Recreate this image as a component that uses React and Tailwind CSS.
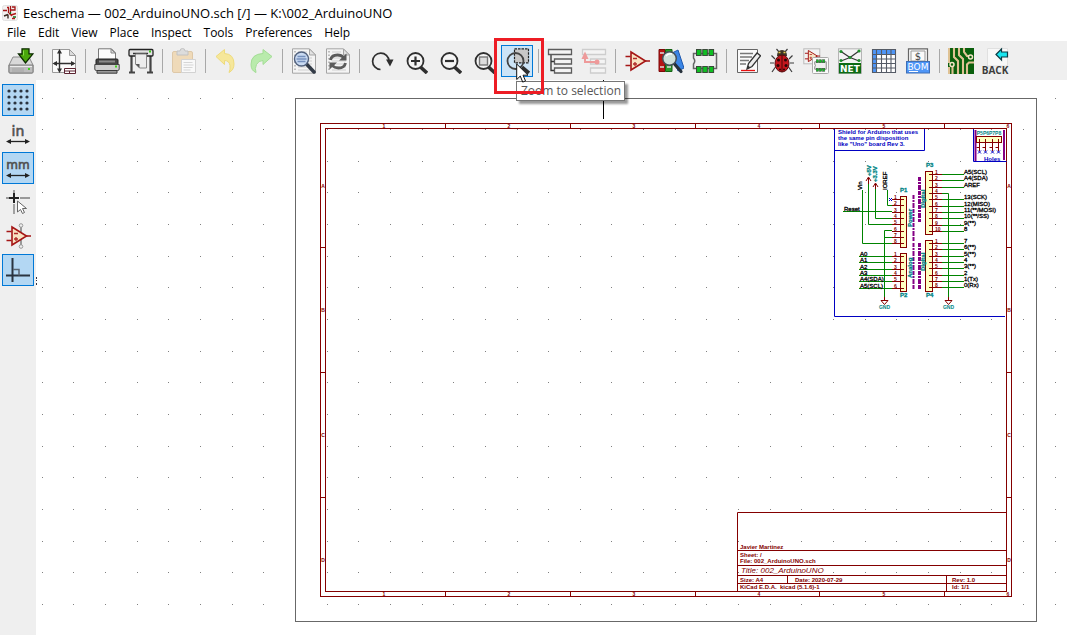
import React from "react";

const DARK = "#2f2f2f";

function Svg({ children, size = 26 }) {
  return (
    <svg width={size} height={size} viewBox="0 0 26 26" fill="none" aria-hidden="true" className="block shrink-0">
      {children}
    </svg>
  );
}

const SaveIcon = () => (
  <Svg>
    <path d="M5 9h16l4 8v7q0 1-1 1H2q-1 0-1-1v-7z" fill="#d9d9d9" stroke="#8a8a8a" />
    <path d="M1 17h24v7q0 1-1 1H2q-1 0-1-1z" fill="#bdbdbd" stroke="#7d7d7d" />
    <path d="M2 18.5h22" stroke="#ececec" />
    <path d="M4 21h12M4 23h12" stroke="#a5a5a5" />
    <rect x="20" y="20" width="2" height="2" fill="#3fd01c" />
    <path d="M14 .8h7v5h4L17.500 15 10.500 6H14z" fill="#4aa70b" stroke="#0d2b02" strokeWidth="1.300" />
    <path d="M15.500 2.500v5" stroke="#8be04a" />
  </Svg>
);

const PageIcon = () => (
  <Svg>
    <path d="M1.500 1.500h17l6 6v17h-23z" fill="#fafafa" stroke="#9a9a9a" />
    <path d="M18.500 1.500v6h6z" fill="#dcdcdc" stroke="#9a9a9a" />
    <path d="M8.500 3v20M3 15.500h20" stroke={DARK} strokeWidth="1.400" />
    <path d="M8.500 1l2.500 4.500H6zM8.500 25l2.500-4.500H6zM1.500 15.500L6 13v5zM24.500 15.500L20 13v5z" fill={DARK} />
    <path d="M13.500 20.500h11v5h-11zM13.500 23h11M18.500 23v2.500" fill="#fff" stroke="#5a2230" />
  </Svg>
);

const PrintIcon = () => (
  <Svg>
    <path d="M4.500.8h13l4 4V13h-17z" fill="#fcfcfc" stroke="#777" />
    <path d="M17 1v4h4z" fill="#ddd" stroke="#888" />
    <rect x="2" y="11" width="22" height="6" rx="1" fill="#454545" stroke="#222" />
    <path d="M5 13.500h16" stroke="#8a8a8a" strokeWidth="2" />
    <path d="M.8 16.500h24.400V21q0 1.500-1.500 1.500H2.300Q.8 22.500.8 21z" fill="#cfcfcf" stroke="#444" />
    <path d="M3 22.500h20v2.700H3z" fill="#9a9a9a" stroke="#3b3b3b" />
    <rect x="21" y="17.500" width="2" height="2" fill="#41d21c" />
  </Svg>
);

const PlotIcon = () => (
  <Svg>
    <path d="M3.500 7v17M22.500 7v17M1 24.500h6M19 24.500h6" stroke="#444" strokeWidth="2.200" />
    <path d="M2 1.500h22q1 0 1 1.500v4q0 1-1 1H2q-1 0-1-1V3q0-1.500 1-1.500z" fill="#e2e2e2" stroke="#222" strokeWidth="1.300" />
    <path d="M5 5.500h15" stroke="#333" strokeWidth="1.500" />
    <path d="M7.500 6h11v14h-7l-4-4z" fill="#ededed" stroke="#888" />
    <path d="M7.500 16h4v4z" fill="#555" />
    <rect x="21" y="2.500" width="2" height="2" fill="#38cb16" />
  </Svg>
);

const PasteIcon = () => (
  <Svg>
    <g opacity=".65">
      <rect x="1.500" y="3.500" width="20" height="21" rx="1.500" fill="#efcf9d" stroke="#d5b483" />
      <path d="M6 3h3q0-2.500 2.500-2.500T14 3h3v4H6z" fill="#d2d2d2" stroke="#aaa" />
      <path d="M10.500 11.500h14v13h-14z" fill="#fff" stroke="#c3c3c3" />
      <path d="M12.500 14.500h9M12.500 17h10M12.500 19.500h9M12.500 22h7" stroke="#c9c9c9" />
    </g>
  </Svg>
);

const UndoIcon = () => (
  <Svg>
    <path d="M2 8.500L10.500 1.500v4Q20 6 20 16q0 6-5 8.500 1.500-3 1-7-.8-5-5.500-5v4z" fill="#f6e79a" stroke="#eedb7c" />
  </Svg>
);
const RedoIcon = () => (
  <Svg>
    <path d="M24 8.500L15 1.500v4Q3 6 3 16.500q0 6 5 8-1.500-4 .5-8 2-4 6.500-4v4z" fill="#b9ebac" stroke="#a3dd95" />
  </Svg>
);

const PageLines = () => (
  <>
    <path d="M1.500.8h17l6 6v18.400h-23z" fill="#f4f4f4" stroke="#a5a5a5" />
    <path d="M18.500 1v6h6z" fill="#e2e2e2" stroke="#a5a5a5" />
    <path d="M4 3v21" stroke="#aaa" strokeWidth="1.500" strokeDasharray="1.500 2" />
    <path d="M7 4h9M7 7h9M7 10h14M7 13h14M7 16h14M7 19h14M7 22h14" stroke="#cfcfcf" />
  </>
);
const FindIcon = () => (
  <Svg>
    <PageLines />
    <path d="M15.500 16l7.500 8" stroke="#333b47" strokeWidth="3.500" strokeLinecap="round" />
    <circle cx="10.500" cy="11" r="7" fill="#c9daf2" stroke="#51617d" strokeWidth="1.400" />
    <path d="M6.500 8.500h8M5.500 11h10M6.500 13.500h8" stroke="#7590bd" strokeWidth="1.300" />
  </Svg>
);
const ReplaceIcon = () => (
  <Svg>
    <PageLines />
    <path d="M5.500 12q1-5 7-5 4 0 6 2.500M20.500 15q-1 5-7 5-4 0-6-2.500" stroke="#5b5b5b" strokeWidth="2.800" />
    <path d="M21.500 5.500V12.500H14zM4.500 21.500V14.500H12z" fill="#5b5b5b" />
  </Svg>
);
const RedrawIcon = () => (
  <Svg>
    <path d="M12.500 21.500A8.200 8.200 0 1 1 21 13" stroke={DARK} strokeWidth="1.700" />
    <path d="M18 11.500h7.500L22 18.500z" fill={DARK} />
  </Svg>
);

const Lens = ({ children }) => (
  <Svg>
    <path d="M18.500 19l6.500 6" stroke={DARK} strokeWidth="3.600" />
    <circle cx="13.500" cy="13" r="8" fill="#f5f5f5" stroke={DARK} strokeWidth="1.800" />
    {children}
  </Svg>
);
const ZoomInIcon = () => (
  <Lens><path d="M9 13h9M13.500 8.500v9" stroke={DARK} strokeWidth="2.200" /></Lens>
);
const ZoomOutIcon = () => (
  <Lens><path d="M9 13h9" stroke={DARK} strokeWidth="2.200" /></Lens>
);
const ZoomFitIcon = () => (
  <Lens><rect x="9.500" y="9" width="8" height="8" fill="#ddd" stroke="#777" strokeWidth="1.400" /></Lens>
);
const ZoomSelIcon = () => (
  <Svg>
    <rect x="10.500" y=".8" width="14" height="14" fill="#c8c8c8" stroke="#222" strokeWidth="1.200" strokeDasharray="2.500 1" />
    <path d="M18 19l7 6" stroke={DARK} strokeWidth="3.600" />
    <circle cx="11.500" cy="13" r="8" stroke="#444" strokeWidth="1.800" />
  </Svg>
);

const HierIcon = () => (
  <Svg>
    <path d="M4 6v16.500h3M4 13.500h3" stroke="#333" strokeWidth="1.300" />
    <path d="M1.500 1.500h23v5h-23zM7.500 11h17v5h-17zM7.500 20h17v5h-17z" fill="#f4f4f4" stroke="#5c5c5c" strokeWidth="1.300" />
  </Svg>
);
const LeaveIcon = () => (
  <Svg>
    <path d="M1.500 1.500h23v5h-23zM9.500 11h15v5h-15zM9.500 20h15v5h-15z" fill="#f4f4f4" stroke="#cdcdcd" strokeWidth="1.300" />
    <path d="M4 9v5h12" stroke="#ee9a9a" strokeWidth="2" />
    <path d="M4 3.500L7.500 11H.5z" fill="#ee9a9a" />
    <circle cx="16" cy="14" r="2.500" fill="#ee9a9a" />
  </Svg>
);

const OpAmp = () => (
  <>
    <path d="M1.500 8.500h5M1.500 17.500h5M20 13h6" stroke="#a51616" strokeWidth="1.600" />
    <path d="M7 4v18L21.500 13z" fill="#f8e3c3" stroke="#a51616" strokeWidth="1.600" />
    <path d="M9 10.500h4M9 16h4M11 14v4" stroke="#b02a2a" strokeWidth="1.300" />
  </>
);
const SymbolIcon = () => <Svg><OpAmp /></Svg>;

const LibraryIcon = () => (
  <Svg>
    <path d="M14 5l6-3 6 18-6 3z" fill="#3b86e6" stroke="#1f59ad" />
    <path d="M1 1.500h6v22H1z" fill="#b51414" stroke="#7d0909" />
    <path d="M7.500 1.500h6.500v22H7.500z" fill="#2b9a2b" stroke="#146314" />
    <path d="M2 5h4M2 19h4M9 19h4" stroke="#ddd" strokeWidth="1.500" />
    <path d="M16.500 16l6.500 7.500" stroke="#26303a" strokeWidth="3.200" strokeLinecap="round" />
    <circle cx="11.500" cy="10.500" r="6.800" fill="#cfe0da" stroke="#45505a" strokeWidth="1.500" />
    <path d="M8 8q2-3 6-2" stroke="#fff" strokeWidth="1.500" />
  </Svg>
);

const Chip = () => (
  <>
    <path d="M1.500 5.500h23v15h-23v-4.500q2.500-3 0-6z" fill="#f0f0f0" stroke="#666" strokeWidth="1.500" />
    <g fill="#0fbf22" stroke="#3a4a3a" strokeWidth="1">
      {[4.5, 10.75, 17].map((x) => (
        <React.Fragment key={x}>
          <rect x={x} y="1.500" width="4.600" height="6" />
          <rect x={x} y="18.500" width="4.600" height="6" />
        </React.Fragment>
      ))}
    </g>
  </>
);
const FootprintIcon = () => <Svg><Chip /></Svg>;

const AnnotateIcon = () => (
  <Svg>
    <path d="M2.500 1.500h20v23h-20z" fill="#fafafa" stroke="#666" />
    <path d="M5 5.500h13M5 9h12M5 12.500h9M5 16h6" stroke="#777" strokeWidth="1.300" />
    <path d="M6 22.500h14" stroke="#e80f0f" strokeWidth="1.300" />
    <path d="M12 21l1.500-5.500L22 5l3.500 2.800L17 18.500z" fill="#eee" stroke="#333" strokeWidth="1.300" />
    <path d="M12 21l1-3.500 2.500 2z" fill="#333" />
  </Svg>
);

const BugIcon = () => (
  <Svg>
    <path d="M6 11L2.500 7.500M5 15H1M6.500 19L3 24M20 11l3.500-3.500M21 15h4M19.500 19l3.500 5M10 4L7.500 1M16 4l2.500-3" stroke="#3c3c3c" strokeWidth="1.200" />
    <path d="M8 8q0-6 5-6t5 6z" fill="#3b3426" />
    <ellipse cx="13" cy="15.500" rx="7" ry="8.500" fill="#c5161d" stroke="#5a0b0d" />
    <path d="M13 7v17" stroke="#4a0808" />
    <g fill="#2a0707">
      <circle cx="9.500" cy="12" r="1.500" /><circle cx="16.500" cy="12" r="1.500" />
      <circle cx="9" cy="17.500" r="1.500" /><circle cx="17" cy="17.500" r="1.500" />
      <circle cx="11" cy="21.500" r="1" /><circle cx="15" cy="21.500" r="1" />
    </g>
    <path d="M9.500 4.500h2M14.500 4.500h2" stroke="#e5c94a" strokeWidth="1.400" />
  </Svg>
);

const AssignIcon = () => (
  <Svg>
    <rect x=".8" y=".8" width="16" height="15" fill="#f3f3f3" stroke="#bbb" />
    <g transform="translate(1 0) scale(.62)"><OpAmp /></g>
    <rect x="9.500" y="9.500" width="16" height="16" rx="1" fill="#fafafa" stroke="#aaa" />
    <g transform="translate(11 11) scale(.5)"><Chip /></g>
  </Svg>
);

const NetIcon = () => (
  <Svg>
    <rect x="1.500" y=".8" width="23" height="24.500" fill="#f3f3f3" stroke="#b5b5b5" />
    <path d="M4 3.500L13 9.500 22 3M13 9.500L4 13M13 9.500L22 13" stroke="#333" strokeWidth="1.200" />
    <g fill="#1c8f2a">
      <circle cx="4" cy="3.500" r="1.600" /><circle cx="22" cy="3" r="1.600" />
      <circle cx="4" cy="12.500" r="1.600" /><circle cx="22" cy="12.500" r="1.600" /><circle cx="13" cy="9.500" r="1.600" />
    </g>
    <rect x="2" y="15" width="22" height="10.500" fill="#0c6b14" />
    <text x="13" y="23.500" textAnchor="middle" className="fill-white font-['DejaVu_Sans'] text-[9px] font-bold">NET</text>
  </Svg>
);

const TableIcon = () => (
  <Svg>
    <path d="M1.500 1.500h23v23h-23z" fill="#fff" />
    <path d="M1.500 1.500h23v5h-23zM1.500 1.500h4v23h-4z" fill="#4f96f7" />
    <path d="M1.500 1.500h23v23h-23zM5.500 1.500v23M10.500 1.500v23M15.500 1.500v23M20 1.500v23M1.500 6.500h23M1.500 11h23M1.500 15.500h23M1.500 20h23" stroke="#555b66" strokeWidth="1.100" />
  </Svg>
);

const BomIcon = () => (
  <Svg>
    <path d="M3.500.8h19v14h-19z" fill="#fafafa" stroke="#666" strokeWidth="1.200" />
    <path d="M6 3h14v10H6z" stroke="#999" />
    <text x="13" y="12" textAnchor="middle" className="fill-[#444] font-['DejaVu_Sans'] text-[10px]">$</text>
    <rect x="1.500" y="13.500" width="23" height="11.500" fill="#4f96f7" stroke="#3e6fb6" />
    <text x="13" y="22" textAnchor="middle" className="fill-white font-['DejaVu_Sans'] text-[9px]">BOM</text>
    <path d="M4 23.500h9" stroke="#fff" />
  </Svg>
);

const BoardIcon = () => (
  <Svg>
    <path d="M0 0h26v26H0z" fill="#0a5f0d" />
    <path d="M1 0v15M1 19v7M6 0v9l4 4v13M11 0v7l4 4v15M26 14.500h-5l-2 2V26M16 0v4l3 4h2M4.500 18v8" stroke="#dfc294" strokeWidth="2.100" />
    <circle cx="4" cy="16.500" r="2" fill="#0a5f0d" stroke="#f3e4c6" strokeWidth="1.500" />
    <circle cx="22.500" cy="9" r="2" fill="#0a5f0d" stroke="#f3e4c6" strokeWidth="1.500" />
  </Svg>
);

const BackIcon = () => (
  <svg width="30" height="32" viewBox="-2 -3 30 32" aria-hidden="true" className="block shrink-0">
    <path d="M5.500.5h20V18h-20z" fill="#f8f8f8" stroke="#e0e0e0" />
    <path d="M14 6.500L19.500 1v3h6v5h-6v3z" fill="#19e5ef" stroke="#0b3b44" strokeWidth="1.200" />
    <text x="13" y="26" textAnchor="middle" className="fill-[#3d3d3d] font-['Open_Sans'] text-[10px] font-bold">BACK</text>
  </svg>
);

const GridIcon = () => (
  <Svg>
    <g fill="#2a3440">
      {[4, 10, 16, 22].map((y) => [4, 10, 16, 22].map((x) => <circle key={`${x}-${y}`} cx={x} cy={y} r="1.600" />))}
    </g>
  </Svg>
);
const UnitArrow = () => (
  <>
    <path d="M3 20.500h20" stroke="#222" strokeWidth="1.300" />
    <path d="M1 20.500l5-2.500v5zM25 20.500l-5-2.500v5z" fill="#222" />
  </>
);
const InIcon = () => (
  <Svg>
    <text x="13" y="15" textAnchor="middle" stroke="#505050" strokeWidth=".6" className="fill-[#505050] font-['DejaVu_Sans'] text-[14px]">in</text>
    <UnitArrow />
  </Svg>
);
const MmIcon = () => (
  <Svg>
    <text x="13" y="14" textAnchor="middle" stroke="#505050" strokeWidth=".6" className="fill-[#505050] font-['DejaVu_Sans'] text-[12px]">mm</text>
    <UnitArrow />
  </Svg>
);
const CursorIcon = () => (
  <Svg>
    <path d="M1 9h3M15 9h10M9 1v3M9 15v10" stroke="#999" strokeWidth="1.800" />
    <path d="M4 9h10M9 4v10" stroke="#222" strokeWidth="2" />
    <path d="M12.500 12v11l3-2.500 2 4 2-1-2-4h4z" fill="#fff" stroke="#666" />
  </Svg>
);
const HiddenPinIcon = () => (
  <Svg>
    <path d="M16 3v20" stroke="#999" strokeWidth="2" />
    <circle cx="16" cy="2.500" r="1.800" fill="#eee" stroke="#999" />
    <circle cx="16" cy="23.500" r="1.800" fill="#eee" stroke="#999" />
    <OpAmp />
  </Svg>
);
const OrthoIcon = () => (
  <Svg>
    <path d="M7.500 1v24M1 18.500h24" stroke="#2a3440" strokeWidth="2" />
    <path d="M8 12.500h6v6" stroke="#5a6674" strokeWidth="1.500" />
  </Svg>
);

const toolGroups = [
  [["Save", SaveIcon]],
  [["Page settings", PageIcon]],
  [["Print", PrintIcon], ["Plot", PlotIcon]],
  [["Paste", PasteIcon, true]],
  [["Undo", UndoIcon, true], ["Redo", RedoIcon, true]],
  [["Find", FindIcon], ["Find and replace", ReplaceIcon]],
  [["Redraw", RedrawIcon], ["Zoom in", ZoomInIcon], ["Zoom out", ZoomOutIcon], ["Zoom to fit", ZoomFitIcon], ["Zoom to selection", ZoomSelIcon]],
  [["Navigate hierarchy", HierIcon], ["Leave sheet", LeaveIcon, true]],
  [["Symbol editor", SymbolIcon], ["Symbol libraries", LibraryIcon], ["Footprint editor", FootprintIcon]],
  [["Annotate", AnnotateIcon], ["Electrical rules check", BugIcon], ["Assign footprints", AssignIcon], ["Generate netlist", NetIcon], ["Edit symbol fields", TableIcon], ["Bill of materials", BomIcon]],
  [["Open board editor", BoardIcon], ["Back-import footprints", BackIcon]],
];

function ToolButton({ name, Icon, disabled }) {
  if (name === "Zoom to selection") {
    return (
      <div className="relative mx-px h-8 w-8 shrink-0">
        <button type="button" aria-label={name} className="flex h-8 w-8 items-center justify-center border border-[#0078d7] bg-[#cce4f7]">
          <Icon />
        </button>
        <div role="tooltip" className="absolute top-9 left-[15px] z-10 border border-[#767676] bg-white pr-[3px] pl-1 text-[12px] leading-[18px] whitespace-nowrap text-[#575757] shadow-[3px_3px_2px_rgba(0,0,0,0.4)]">
          {name}
        </div>
        <div className="pointer-events-none absolute -top-[7px] -left-[7px] z-20 h-14 w-[50px] border-[3px] border-[#ed1c24]" />
        <svg width="14" height="21" viewBox="0 0 14 21" aria-hidden="true" className="absolute top-[18px] left-[15px] z-30">
          <path d="M.7 1v15.500l3.600-3.400 2.400 6 2.800-1.200-2.500-5.700h5z" fill="#fff" stroke="#111" />
        </svg>
      </div>
    );
  }
  return (
    <button type="button" aria-label={name} disabled={disabled} className="mx-px flex h-8 w-8 shrink-0 items-center justify-center">
      <Icon />
    </button>
  );
}

const sideTools = [
  ["Show grid", GridIcon, true],
  ["Inches", InIcon, false],
  ["Millimetres", MmIcon, true],
  ["Cursor shape", CursorIcon, false],
  ["Show hidden pins", HiddenPinIcon, false],
  ["Orthogonal wires", OrthoIcon, true],
];

const GRID = 31.65;
const gridDots = [];
for (let i = 0; i < 33; i++) {
  for (let j = 0; j < 17; j++) {
    gridDots.push([Math.floor(42.300 + i * GRID), Math.floor(98 + j * GRID)]);
  }
}

const pinY = (first, i) => Math.round(first + i * 6.35 - 0.5) + 0.5;

const frameCols = [384, 509, 634, 759, 884, 1008];
const frameRows = [["A", 188], ["B", 312], ["C", 437], ["D", 562]];

const rightTop = ["A5(SCL)", "A4(SDA)", "AREF", null, "13(SCK)", "12(MISO)", "11(**/MOSI)", "10(**/SS)", "9(**)", "8"];
const rightBottom = ["7", "6(**)", "5(**)", "4", "3(**)", "2", "1(Tx)", "0(Rx)"];
const leftBottom = ["A0", "A1", "A2", "A3", "A4(SDA)", "A5(SCL)"];

function Connector({ x, top, first, count, height, side }) {
  const rows = Array.from({ length: count }, (_, i) => i);
  return (
    <g>
      <rect x={x} y={top} width={side === "left" ? 6 : 7} height={height} fill="#ffffc2" stroke="#840000" strokeWidth="1" />
      {rows.map((i) => {
        const y = pinY(first, i);
        return (
          <g key={i}>
            <path d={side === "left" ? `M892 ${y}h12` : `M929 ${y}h13`} stroke="#840000" />
            <text x={side === "left" ? 894 : 935} y={y - 1} fill="#840000" className="text-[5px] font-bold">{i + 1}</text>
          </g>
        );
      })}
    </g>
  );
}

function Ground({ x }) {
  return (
    <g>
      <path d={`M${x} 297v3M${x - 3.5} 300.500h7l-3.500 4z`} fill="none" stroke="#840000" />
      <text x={x} y="309" textAnchor="middle" fill="#008484" className="text-[5px] font-bold">GND</text>
    </g>
  );
}

function Schematic() {
  return (
    <svg width="1031" height="555" viewBox="36 80 1031 555" fill="none" role="img" aria-label="Schematic sheet" className="block shrink-0 font-['Liberation_Sans',sans-serif]">
      <g fill="#808080">
        {gridDots.map(([x, y]) => <rect key={`${x}-${y}`} x={x} y={y} width="1" height="1" />)}
      </g>
      <path d="M36.500 277v2M36.500 280v1M36.500 283v2" stroke="#334" />
      <rect x="295.500" y="98.500" width="741" height="523" stroke="#686868" />
      <path d="M603.500 80v39" stroke="#000" />

      <g stroke="#840000">
        <rect x="320.500" y="123.500" width="691" height="473" />
        <rect x="325.500" y="128.500" width="681" height="463" />
        {[445.5, 570.5, 695.5, 819.5, 944.5].map((x) => <path key={x} d={`M${x} 124v5M${x} 592v5`} />)}
        {[247.5, 372.5, 497.5].map((y) => <path key={y} d={`M321 ${y}h5M1007 ${y}h5`} />)}
        <path d="M737.500 591V512.500H1006M738 550.500h268M738 565.500h268M738 575.500h268M738 583.500h268M787.500 576v8M946.500 576v15" />
      </g>
      <g fill="#840000" textAnchor="middle" className="text-[5px] font-bold">
        {frameCols.map((x, i) => (
          <g key={x}>
            <text x={x} y="128">{i + 1}</text>
            <text x={x} y="596">{i + 1}</text>
          </g>
        ))}
        {frameRows.map(([label, y]) => (
          <g key={label}>
            <text x="323" y={y}>{label}</text>
            <text x="1009" y={y}>{label}</text>
          </g>
        ))}
      </g>
      <g fill="#840000" className="text-[6px] font-bold">
        <text x="740" y="549">Javier Martinez</text>
        <text x="740" y="557">Sheet: /</text>
        <text x="740" y="563">File: 002_ArduinoUNO.sch</text>
        <text x="740" y="582">Size: A4</text>
        <text x="795" y="582">Date: 2020-07-29</text>
        <text x="952" y="582">Rev: 1.0</text>
        <text x="740" y="589" className="whitespace-pre">KiCad E.D.A.  kicad (5.1.6)-1</text>
        <text x="952" y="589">Id: 1/1</text>
      </g>
      <text x="741" y="573" fill="#840000" className="text-[8px] italic">Title: 002_ArduinoUNO</text>

      <g stroke="#0000c2">
        <path d="M834.500 129v187.500H1005M834.500 150.500h90V129M973.500 129v32.500h33" />
      </g>
      <g fill="#0000c2" className="text-[6px] font-bold">
        <text x="838" y="134">Shield for Arduino that uses</text>
        <text x="838" y="140">the same pin disposition</text>
        <text x="838" y="146">like "Uno" board Rev 3.</text>
        <text x="984" y="161">Holes</text>
      </g>

      <path d="M975.500 130v31M1004 130v30" stroke="#840084" strokeWidth="2" />
      <rect x="976.500" y="136.500" width="25" height="6" fill="#ffffc2" stroke="#840000" />
      <text x="989" y="135" textAnchor="middle" fill="#008484" className="text-[5px] font-bold">P5P6P7P8</text>
      {[979.5, 985.5, 992.5, 998.5].map((x) => (
        <g key={x}>
          <path d={`M${x} 139v12M${x - 3} 147.500h3`} stroke="#840000" />
          <path d={`M${x - 1.5} 150.500l3 3M${x + 1.5} 150.500l-3 3`} stroke="#0000c2" />
        </g>
      ))}

      <g stroke="#008400">
        <path d="M887.500 190v15.500H892M843 211.500h49M875.500 188v30.500H892M868.500 181v43.500H892M892 230.500h-7.500V298M892 237.500h-7.500M862.500 190v53.500H892" />
        <path d="M942 193.500h6.500V298" />
        {rightTop.map((label, i) => label && <path key={label} d={`M942 ${pinY(174.5, i)}h22`} />)}
        {rightBottom.map((label, i) => <path key={label} d={`M942 ${pinY(243.5, i)}h22`} />)}
        {leftBottom.map((label, i) => <path key={label} d={`M859 ${pinY(256.5, i)}h33`} />)}
      </g>
      <g fill="#000" stroke="#000" strokeWidth="0.300" className="text-[6px]">
        {rightTop.map((label, i) => label && <text key={label} x="964" y={pinY(174.5, i) - 1}>{label}</text>)}
        {rightBottom.map((label, i) => <text key={label} x="964" y={pinY(243.5, i) - 1}>{label}</text>)}
        {leftBottom.map((label, i) => <text key={label} x="860" y={pinY(256.5, i) - 1}>{label}</text>)}
        <text x="844" y="211">Reset</text>
        <text transform="translate(862 190) rotate(-90)">Vin</text>
        <text transform="translate(887 190) rotate(-90)">IOREF</text>
      </g>

      <Connector side="left" x={900.5} top={196.5} first={199.5} count={8} height={51} />
      <Connector side="left" x={900.5} top={253.5} first={256.5} count={6} height={38} />
      <Connector side="right" x={925.5} top={171.5} first={174.5} count={10} height={63} />
      <Connector side="right" x={925.5} top={240.5} first={243.5} count={8} height={51} />
      <path d="M889 198l3 3M892 198l-3 3" stroke="#0000c2" />
      <path d="M868.500 184v-6M866 181l2.500-4 2.500 4M875.500 189v-5M873 187l2.500-4 2.500 4" stroke="#840000" />

      <g stroke="#840084" strokeDasharray="4 1 2 1 5 1">
        <path d="M913.500 195v46M913.500 243v46" strokeWidth="2" />
        <path d="M919.500 177v45M919.500 243v46" strokeWidth="3" />
      </g>
      <g fill="#008484" stroke="#008484" strokeWidth="0.300" className="text-[6px] font-bold">
        <text x="900" y="192">P1</text>
        <text x="926" y="167">P3</text>
        <text x="900" y="297">P2</text>
        <text x="926" y="297">P4</text>
        <text transform="translate(912 227) rotate(-90)">Power</text>
        <text transform="translate(912 278) rotate(-90)">Analog</text>
        <text transform="translate(925 208) rotate(-90)">Digital</text>
        <text transform="translate(925 271) rotate(-90)">Digital</text>
        <text transform="translate(871 176) rotate(-90)">+5V</text>
        <text transform="translate(877 182) rotate(-90)">+3.3V</text>
      </g>
      <Ground x={884.5} />
      <Ground x={948.5} />
    </svg>
  );
}

export default function App() {
  return (
    <div className="flex h-screen flex-col overflow-hidden bg-white font-['Open_Sans','Noto_Sans',sans-serif] text-black">
      <header className="flex h-[25px] shrink-0 items-center gap-[5px] pl-[2px]">
        <svg width="16" height="16" viewBox="0 0 16 16" fill="none" aria-hidden="true">
          <rect x=".5" y=".5" width="15" height="15" rx="2" fill="#f3f1f0" stroke="#e2e2e2" />
          <path d="M1 5.500h4M6.500 3v5M9 5h4V2h-3M8.500 1v6" stroke="#a31515" strokeWidth="1.300" />
          <path d="M5 2.500h2M7 8l3 3M9 10l5-1.500M10 13.500h3" stroke="#b01818" strokeWidth="1.400" />
          <path d="M2 11l4-1.500M6 9.500v4" stroke="#3a2b22" strokeWidth="1.400" />
          <path d="M8.500 7v2M11 12h3" stroke="#1a6b1a" strokeWidth="1.300" />
        </svg>
        <h1 className="text-[13px] leading-5 whitespace-nowrap">Eeschema — 002_ArduinoUNO.sch [/] — K:\002_ArduinoUNO</h1>
      </header>
      <nav className="flex h-4 shrink-0 items-center gap-3 pl-[7px] text-[12px] leading-4">
        {["File", "Edit", "View", "Place", "Inspect", "Tools", "Preferences", "Help"].map((item) => (
          <button key={item} type="button">{item}</button>
        ))}
      </nav>
      <div role="toolbar" aria-label="Main" className="flex h-[39px] shrink-0 items-start bg-[#efefef] pt-1 pl-1">
        {toolGroups.map((group, g) => (
          <React.Fragment key={group[0][0]}>
            {g > 0 && <div className="mx-1 mt-1 h-6 w-px shrink-0 bg-[#a8a8a8]" />}
            {group.map(([name, Icon, disabled]) => (
              <ToolButton key={name} name={name} Icon={Icon} disabled={disabled} />
            ))}
          </React.Fragment>
        ))}
      </div>
      <div className="flex min-h-0 flex-1">
        <div role="toolbar" aria-label="Options" className="flex w-9 shrink-0 flex-col items-center gap-[2px] bg-[#efefef] pt-1">
          {sideTools.map(([name, Icon, on]) => (
            <button
              key={name}
              type="button"
              aria-label={name}
              aria-pressed={on}
              className={`flex h-8 w-8 shrink-0 items-center justify-center ${on ? "border border-[#0078d7] bg-[#b3d7f3]" : ""}`}
            >
              <Icon />
            </button>
          ))}
        </div>
        <main className="min-w-0 flex-1 overflow-hidden">
          <Schematic />
        </main>
      </div>
    </div>
  );
}
